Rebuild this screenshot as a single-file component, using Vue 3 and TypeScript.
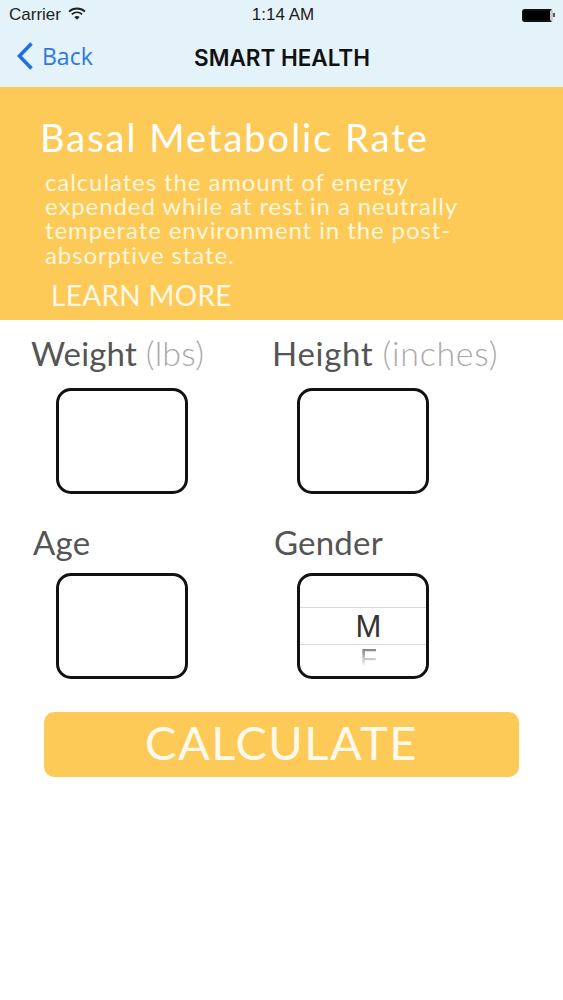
<script setup lang="ts">
const lines: string[] = [
  'calculates the amount of energy',
  'expended while at rest in a neutrally',
  'temperate environment in the post-',
  'absorptive state.',
]
</script>

<template>
  <div class="screen">
    <header class="head">
      <div class="status">
        <div class="carrier">
          <span>Carrier</span>
          <svg class="wifi" width="18" height="13" viewBox="0 0 17 12">
            <path d="M1 4.2C5.3 .4 11.7 .4 16 4.2" fill="none" stroke="#222" stroke-width="1.8" />
            <path d="M3.6 6.8C6.5 4.3 10.5 4.3 13.4 6.8" fill="none" stroke="#222" stroke-width="1.8" />
            <path d="M6 9.2C7.4 8 9.6 8 11 9.2L8.5 11.8Z" fill="#222" />
          </svg>
        </div>
        <div class="time">1:14 AM</div>
        <div class="battery"><span class="cell"></span><span class="nub"></span></div>
      </div>
      <nav class="nav">
        <div class="back">
          <svg width="18" height="30" viewBox="0 0 18 30">
            <path d="M15.5 2.5 3.5 15l12 12.5" fill="none" stroke="#1f6fe0" stroke-width="3.6" />
          </svg>
          <span>Back</span>
        </div>
        <div class="title">SMART HEALTH</div>
      </nav>
    </header>

    <section class="banner">
      <h1>Basal Metabolic Rate</h1>
      <p><span v-for="line in lines" :key="line">{{ line }}</span></p>
      <div class="more">LEARN MORE</div>
    </section>

    <main class="form">
      <div class="field">
        <div class="label l1">Weight <em>(lbs)</em></div>
        <div class="box"></div>
      </div>
      <div class="field">
        <div class="label l1 wide">Height <em>(inches)</em></div>
        <div class="box"></div>
      </div>
      <div class="field second">
        <div class="label l2">Age</div>
        <div class="box"></div>
      </div>
      <div class="field second">
        <div class="label l2">Gender</div>
        <div class="box picker">
          <div class="row selected"><span>M</span></div>
          <div class="faded">F</div>
        </div>
      </div>
    </main>

    <div class="actions">
      <button class="calc" type="button">CALCULATE</button>
    </div>
  </div>
</template>

<style>
html, body { margin: 0; background: #fff; }
</style>

<style scoped>
.screen {
  width: 563px;
  height: 1000px;
  overflow: hidden;
  background: #fff;
  font-family: Lato, "Open Sans", sans-serif;
}
.head {
  height: 87px;
  background: #e4f2f9;
  font-family: "Liberation Sans", Arial, sans-serif;
  box-sizing: border-box;
}
.status {
  height: 30px;
  padding: 0 8px 0 9px;
  display: grid;
  grid-template-columns: 1fr auto 1fr;
  align-items: center;
  font-size: 17px;
  color: #222;
}
.carrier { display: flex; align-items: center; gap: 7px; }
.wifi { margin-top: -3px; }
.time { font-size: 17px; color: #1c1c1c; margin-left: 2px; }
.battery { justify-self: end; display: flex; align-items: center; }
.cell {
  width: 26px;
  height: 9px;
  background: #000;
  border: 2px solid #111;
  border-right: 3px solid #ccc;
  border-radius: 3px;
  box-sizing: content-box;
}
.nub { width: 2px; height: 4px; background: #555; }
.nav { position: relative; height: 54px; display: flex; align-items: center; justify-content: center; }
.back {
  position: absolute;
  left: 16px;
  top: 10px;
  display: flex;
  align-items: center;
  gap: 8px;
  color: #2f78dc;
  font-size: 23px;
  font-family: "Open Sans", sans-serif;
}
.title { font-size: 22.5px; color: #111; margin-left: 1px; margin-top: 1px; font-family: Inter, sans-serif; font-weight: 600; }

.banner {
  height: 233px;
  background: #fdca57;
  color: #fff;
  box-sizing: border-box;
  padding: 28px 0 0 40px;
}
.banner h1 {
  margin: 0;
  font-size: 38px;
  line-height: 44px;
  font-weight: 400;
  letter-spacing: 2px;
  height: 44px;
}
.banner p {
  margin: 11px 0 0 5px;
  font-size: 24px;
  line-height: 24.2px;
  letter-spacing: .9px;
  color: #fff6dc;
}
.banner p span { display: block; white-space: nowrap; }
.more {
  margin: 11px 0 0 11px;
  font-size: 28px;
  line-height: 34px;
  letter-spacing: .3px;
  color: #fff8e6;
}

.form {
  display: grid;
  grid-template-columns: 241px 242px;
  padding: 12px 0 0 31px;
}
.field.second { margin-top: 27px; }
.label {
  font-size: 33px;
  line-height: 42px;
  color: #555;
  white-space: nowrap;
  letter-spacing: .2px;
}
.label.wide { letter-spacing: .7px; }
.label em { font-size: 34px; font-style: normal; color: #a9a9ad; font-weight: 300; }
.l2 { padding-left: 2px; }
.box {
  width: 132px;
  height: 106px;
  box-sizing: border-box;
  margin: 14px 0 0 25px;
  border: 3px solid #111;
  border-radius: 15px;
  background: #fff;
  overflow: hidden;
  display: flex;
  flex-direction: column;
  align-items: center;
}
.second .box { margin-top: 10px; }
.picker { padding-top: 31px; }
.row.selected {
  width: 100%;
  height: 38px;
  flex: none;
  box-sizing: border-box;
  border-top: 1.5px solid #d9d9d9;
  border-bottom: 1.5px solid #d9d9d9;
  text-align: center;
  font-family: "Liberation Sans", Arial, sans-serif;
  font-size: 31px;
  line-height: 37px;
  color: #333;
}
.row.selected span { display: inline-block; margin-left: 11px; }
.faded {
  font-family: "Liberation Sans", Arial, sans-serif;
  font-size: 28px;
  line-height: 28px;
  margin-top: 0;
  margin-left: 11px;
  height: 24px;
  flex: none;
  overflow: hidden;
  color: #888;
  -webkit-mask-image: linear-gradient(#000 20%, transparent 90%);
  mask-image: linear-gradient(#000 20%, transparent 90%);
}

.actions { padding: 33px 0 0 44px; }
.calc {
  width: 475px;
  height: 65px;
  padding: 0 0 5px;
  border: 0;
  border-radius: 10px;
  background: #fdca57;
  color: #fff9ea;
  font-family: Lato, sans-serif;
  font-size: 47px;
  font-weight: 400;
  letter-spacing: 1.5px;
  line-height: 60px;
}
</style>
